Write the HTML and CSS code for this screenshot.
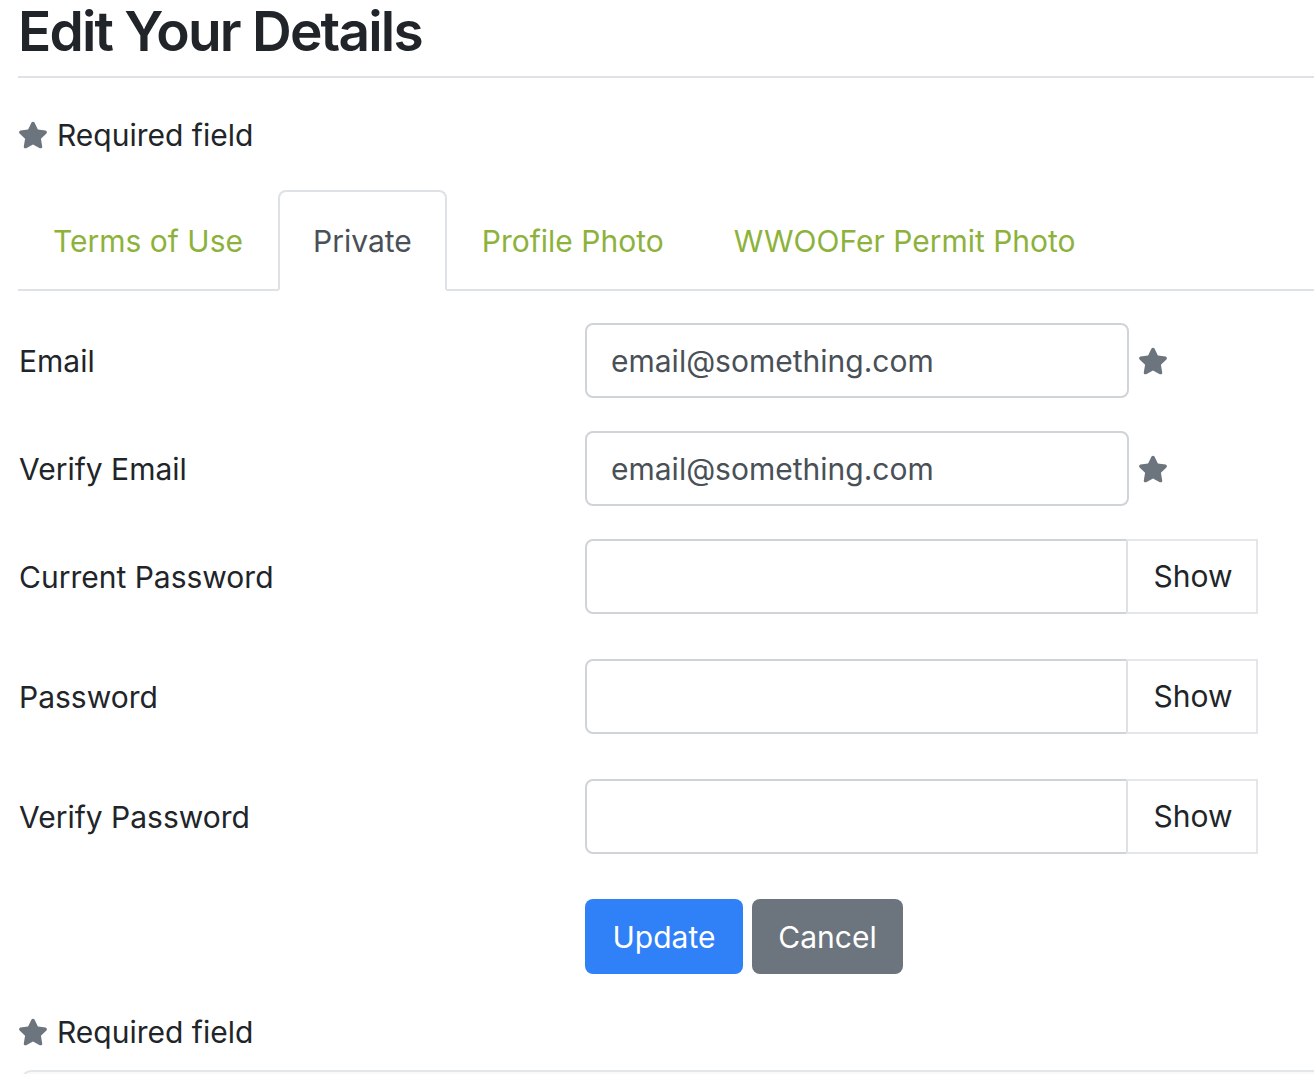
FILE: index.html
```html
<!DOCTYPE html>
<html lang="en">
<head>
<meta charset="utf-8">
<title>Edit Your Details</title>
<link rel="stylesheet" href="styles.css">
</head>
<body>
<div class="page">
  <h2 class="title">Edit Your Details</h2>
  <div class="note"><svg class="star" viewBox="0 0 576 512"><path d="M259.3 17.8L194 150.2 47.9 171.5c-26.2 3.8-36.7 36.1-17.7 54.6l105.7 103-25 145.5c-4.5 26.3 23.2 46 46.4 33.7L288 439.6l130.7 68.7c23.2 12.2 50.9-7.4 46.4-33.7l-25-145.5 105.7-103c19-18.5 8.5-50.8-17.7-54.6L382 150.2 316.7 17.8c-11.7-23.6-45.6-23.9-57.4 0z"/></svg><span>Required field</span></div>

  <ul class="tabs">
    <li class="tab"><a href="#">Terms of Use</a></li>
    <li class="tab active"><a href="#">Private</a></li>
    <li class="tab"><a href="#">Profile Photo</a></li>
    <li class="tab"><a href="#">WWOOFer Permit Photo</a></li>
  </ul>

  <form class="form">
    <div class="row">
      <label class="label">Email</label>
      <div class="field">
        <input class="input" type="text" value="email@something.com">
        <svg class="star req" viewBox="0 0 576 512"><path d="M259.3 17.8L194 150.2 47.9 171.5c-26.2 3.8-36.7 36.1-17.7 54.6l105.7 103-25 145.5c-4.5 26.3 23.2 46 46.4 33.7L288 439.6l130.7 68.7c23.2 12.2 50.9-7.4 46.4-33.7l-25-145.5 105.7-103c19-18.5 8.5-50.8-17.7-54.6L382 150.2 316.7 17.8c-11.7-23.6-45.6-23.9-57.4 0z"/></svg>
      </div>
    </div>
    <div class="row">
      <label class="label">Verify Email</label>
      <div class="field">
        <input class="input" type="text" value="email@something.com">
        <svg class="star req" viewBox="0 0 576 512"><path d="M259.3 17.8L194 150.2 47.9 171.5c-26.2 3.8-36.7 36.1-17.7 54.6l105.7 103-25 145.5c-4.5 26.3 23.2 46 46.4 33.7L288 439.6l130.7 68.7c23.2 12.2 50.9-7.4 46.4-33.7l-25-145.5 105.7-103c19-18.5 8.5-50.8-17.7-54.6L382 150.2 316.7 17.8c-11.7-23.6-45.6-23.9-57.4 0z"/></svg>
      </div>
    </div>
    <div class="row pw">
      <label class="label">Current Password</label>
      <div class="group">
        <input class="input grouped" type="password">
        <span class="append">Show</span>
      </div>
    </div>
    <div class="row pw">
      <label class="label">Password</label>
      <div class="group">
        <input class="input grouped" type="password">
        <span class="append">Show</span>
      </div>
    </div>
    <div class="row pw">
      <label class="label">Verify Password</label>
      <div class="group">
        <input class="input grouped" type="password">
        <span class="append">Show</span>
      </div>
    </div>
    <div class="row actions">
      <span></span>
      <div class="buttons">
        <button type="button" class="btn primary">Update</button>
        <button type="button" class="btn secondary">Cancel</button>
      </div>
    </div>
  </form>

  <div class="note bottom"><svg class="star" viewBox="0 0 576 512"><path d="M259.3 17.8L194 150.2 47.9 171.5c-26.2 3.8-36.7 36.1-17.7 54.6l105.7 103-25 145.5c-4.5 26.3 23.2 46 46.4 33.7L288 439.6l130.7 68.7c23.2 12.2 50.9-7.4 46.4-33.7l-25-145.5 105.7-103c19-18.5 8.5-50.8-17.7-54.6L382 150.2 316.7 17.8c-11.7-23.6-45.6-23.9-57.4 0z"/></svg><span>Required field</span></div>
  <div class="card"></div>
</div>
</body>
</html>
```

FILE: styles.css
```css
* { box-sizing: border-box; }
html, body { margin: 0; padding: 0; background: #fff; }
body {
  font-family: Inter, "Liberation Sans", Arial, sans-serif;
  font-size: 30px;
  line-height: 1.5;
  color: #212529;
  overflow: hidden;
}
.page {
  padding-left: 18px;
  width: 1340px;
}
.title {
  margin: -12px 0 0 0;
  font-size: 55px;
  font-weight: 600;
  line-height: 86px;
  letter-spacing: -1.8px;
  border-bottom: 2px solid #dee2e6;
  height: 90px;
}
.note {
  display: flex;
  align-items: center;
  height: 48px;
  margin-top: 33px;
}
.note .star { width: 30px; height: 28px; margin-right: 9px; }
.star { fill: #6c757d; }
.tabs {
  list-style: none;
  margin: 31px 0 0 0;
  padding: 0;
  display: flex;
  border-bottom: 2px solid #dee2e6;
  height: 101px;
}
.tab {
  margin-bottom: -2px;
}
.tab a {
  display: block;
  height: 101px;
  padding: 0 33px;
  line-height: 99px;
  border: 2px solid transparent;
  border-radius: 8px 8px 0 0;
  color: #8db23b;
  text-decoration: none;
}
.tab.active a {
  color: #495057;
  border-color: #dee2e6 #dee2e6 #fff;
  background: #fff;
}
.form { margin-top: 32px; }
.row {
  display: grid;
  grid-template-columns: 567px 1fr;
  align-items: center;
  margin-bottom: 33px;
}
.row.pw { margin-bottom: 45px; }
.label { padding-left: 1px; padding-top: 2px; }
.field, .group { display: flex; align-items: center; }
.input {
  width: 544px;
  height: 75px;
  border: 2px solid #ced4da;
  border-radius: 8px;
  padding: 0 24px;
  font-family: inherit;
  font-size: 30px;
  color: #495057;
  background: #fff;
  outline: none;
}
.input.grouped {
  width: 543px;
  border-radius: 8px 0 0 8px;
}
.req { width: 30px; height: 28px; margin-left: 9px; }
.append {
  width: 132px;
  height: 75px;
  display: flex;
  align-items: center;
  justify-content: center;
  border: 2px solid #e4e7ea;
  border-left: 2px solid #dee2e6;
  margin-left: -2px;
  padding-left: 2px;
  color: #212529;
  background: #fff;
}
.actions { margin-bottom: 34px; }
.buttons { display: flex; gap: 9px; }
.btn {
  height: 75px;
  border: none;
  border-radius: 8px;
  font-family: inherit;
  font-size: 30px;
  color: #fff;
  padding: 0 20px;
}
.primary { background: #3080f8; width: 158px; }
.secondary { background: #6c757d; width: 151px; }
.note.bottom { margin-top: 0; }
.card {
  margin-top: 14px;
  margin-left: 3px;
  height: 40px;
  border: 2px solid #e4e7ea;
  border-radius: 10px 0 0 0;
  background: #f8f9fa;
}
```
